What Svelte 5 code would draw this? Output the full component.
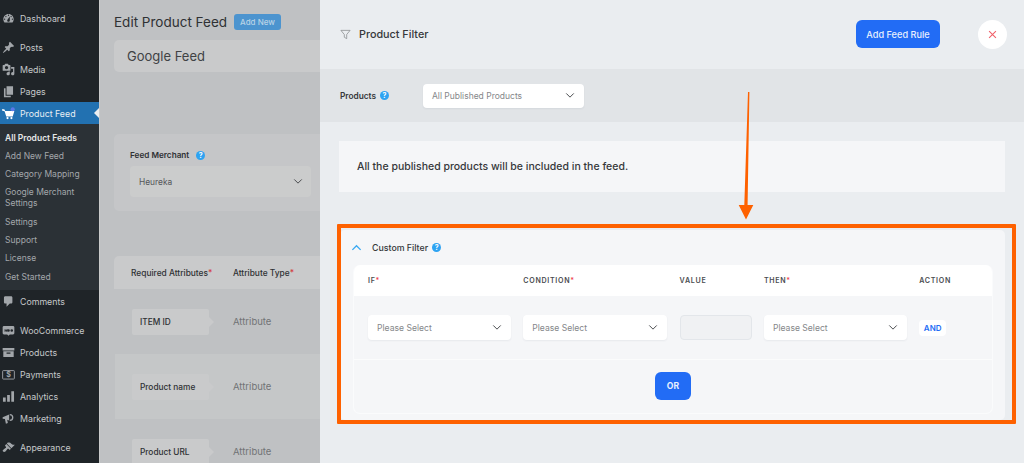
<script>
  const icons = {
    dashboard: 'M3.76 16h12.48c1.1-1.37 1.76-3.11 1.76-5 0-4.42-3.58-8-8-8s-8 3.58-8 8c0 1.89.66 3.63 1.76 5zM10 4c.55 0 1 .45 1 1s-.45 1-1 1-1-.45-1-1 .45-1 1-1zM6 6c.55 0 1 .45 1 1s-.45 1-1 1-1-.45-1-1 .45-1 1-1zm8 0c.55 0 1 .45 1 1s-.45 1-1 1-1-.45-1-1 .45-1 1-1zm-5.37 5.55L12 7v6c0 1.1-.9 2-2 2s-2-.9-2-2c0-.57.24-1.08.63-1.45zM4 10c.55 0 1 .45 1 1s-.45 1-1 1-1-.45-1-1 .45-1 1-1zm12 0c.55 0 1 .45 1 1s-.45 1-1 1-1-.45-1-1 .45-1 1-1z',
    posts: 'M10.44 3.02l1.82-1.82 6.36 6.35-1.83 1.82c-1.05-.68-2.48-.57-3.41.36l-.75.75c-.92.93-1.04 2.35-.35 3.41l-1.83 1.82-2.41-2.41-2.8 2.79c-.42.42-3.38 2.71-3.8 2.29s1.86-3.39 2.28-3.81l2.79-2.79L4.1 9.36l1.83-1.82c1.05.69 2.48.57 3.41-.36l.75-.75c.93-.92 1.04-2.35.35-3.41z',
    media: 'M13 11V4c0-.55-.45-1-1-1h-1.67L9 1H5L3.67 3H2c-.55 0-1 .45-1 1v7c0 .55.45 1 1 1h10c.55 0 1-.45 1-1zM7 4.5c1.38 0 2.5 1.12 2.5 2.5S8.38 9.5 7 9.5 4.5 8.38 4.5 7 5.62 4.5 7 4.5zM14 6h5v10.5c0 1.38-1.12 2.5-2.5 2.5S14 17.88 14 16.5s1.12-2.5 2.5-2.5c.17 0 .34.02.5.05V9h-3V6zm-4 8.05V13h2v3.5c0 1.38-1.12 2.5-2.5 2.5S7 17.88 7 16.5 8.12 14 9.5 14c.17 0 .34.02.5.05z',
    pages: 'M7 15V2h10v13H7zm-1.5 1.5h8V19H3V5h2.5v11.5z',
    comments: 'M5 2h9c1.1 0 2 .9 2 2v7c0 1.1-.9 2-2 2h-2l-5 5v-5H5c-1.1 0-2-.9-2-2V4c0-1.1.9-2 2-2z',
    woo: 'M3 3h14c1.1 0 2 .9 2 2v9c0 1.1-.9 2-2 2h-5l-2 2-2-2H3c-1.1 0-2-.9-2-2V5c0-1.1.9-2 2-2zm1 5v4h1.2l.8-2 .8 2H8l.6-4H7.4l-.3 2-.7-2h-.8l-.7 2-.3-2zm6 0a2 2 0 1 0 0 4 2 2 0 0 0 0-4zm5 0a2 2 0 1 0 0 4 2 2 0 0 0 0-4z',
    products: 'M1 3h18v4H1zM2 8h16v9H2zm5 2v2h6v-2z',
    analytics: 'M1.5 11.5h4.2V18H1.5zM7.9 7.5h4.2V18H7.9zM14.3 2h4.2v16h-4.2z',
    marketing: 'M12 3a5.5 5.5 0 1 1 0 11V12a3.5 3.5 0 1 0 0-7zM1 8.2 11 4v9.2L8 12l1 5-3 1-1.5-7.3L1 10.5z',
    appearance: 'M14.48 11.06L7.41 3.99l1.5-1.5c.5-.56 2.3-.47 3.51.32 1.21.8 1.43 1.28 2.91 2.1 1.18.64 2.45 1.26 4.45.85zm-.71.71L6.7 4.7 4.93 6.47c-.39.39-.39 1.02 0 1.41l1.06 1.06c.39.39.39 1.03 0 1.42-.6.6-1.43 1.11-2.21 1.69-.35.26-.7.53-1.01.84C1.43 13.23.4 14.98 1.72 16.3c1.33 1.33 3.04.25 4.38-.98.3-.31.58-.66.84-1.01.58-.78 1.09-1.61 1.69-2.21.39-.39 1.03-.39 1.42 0l1.06 1.06c.39.39 1.02.39 1.41 0z'
  };

  const topMenu = [
    { label: 'Dashboard', icon: 'dashboard', gap: true },
    { label: 'Posts', icon: 'posts' },
    { label: 'Media', icon: 'media' },
    { label: 'Pages', icon: 'pages' }
  ];
  const submenu = ['All Product Feeds', 'Add New Feed', 'Category Mapping', 'Google Merchant Settings', 'Settings', 'Support', 'License', 'Get Started'];
  const shopMenu = [
    { label: 'WooCommerce', icon: 'woo' },
    { label: 'Products', icon: 'products' },
    { label: 'Payments', icon: 'payments' },
    { label: 'Analytics', icon: 'analytics' },
    { label: 'Marketing', icon: 'marketing', gap: true },
    { label: 'Appearance', icon: 'appearance' }
  ];
  const attrs = [
    { name: 'ITEM ID', alt: false },
    { name: 'Product name', alt: true },
    { name: 'Product URL', alt: false }
  ];
</script>

{#snippet menuItem(item)}
  <div class="menu-item" class:gap={item.gap}>
    {#if item.icon === 'payments'}
      <svg class="mi" viewBox="0 0 20 20" aria-hidden="true">
        <rect x="1" y="4" width="18" height="13" rx="1" fill="none" stroke="#a2a6aa" stroke-width="1.4" />
        <text x="10" y="14.5" text-anchor="middle" font-size="11" font-weight="700" fill="#a2a6aa">$</text>
      </svg>
    {:else}
      <svg class="mi" viewBox="0 0 20 20" aria-hidden="true"><path d={icons[item.icon]} /></svg>
    {/if}
    <span>{item.label}</span>
  </div>
{/snippet}

{#snippet help()}
  <span class="help">?</span>
{/snippet}

{#snippet chevron()}
  <svg class="chev" viewBox="0 0 12 8" aria-hidden="true"><path d="M1.5 1.5 6 6l4.5-4.5" /></svg>
{/snippet}

<div class="page">
  <aside class="sidebar">
    {#each topMenu as item}
      {@render menuItem(item)}
    {/each}

    <div class="menu-item active">
      <svg class="mi cart" viewBox="0 0 20 20" aria-hidden="true">
        <path d="M0 3.5h3.5L5 6h14l-2.5 8.5h-10L4 6.500 0 5.500z" fill="#fff" />
        <circle cx="8.5" cy="17" r="1.7" fill="#fff" />
        <circle cx="14.5" cy="17" r="1.7" fill="#fff" />
        <circle cx="16.5" cy="3.5" r="3.2" fill="#5b78e8" />
      </svg>
      <span>Product Feed</span>
      <i class="notch"></i>
    </div>

    <div class="submenu">
      {#each submenu as label, i}
        <div class="sub-item" class:current={i === 0}>{label}</div>
      {/each}
    </div>

    <div class="menu-item gap">
      <svg class="mi" viewBox="0 0 20 20" aria-hidden="true"><path d={icons.comments} /></svg>
      <span>Comments</span>
    </div>

    {#each shopMenu as item}
      {@render menuItem(item)}
    {/each}
  </aside>

  <main class="main">
    <div class="title-row">
      <h1>Edit Product Feed</h1>
      <span class="add-new">Add New</span>
    </div>
    <div class="feed-name">Google Feed</div>

    <section class="merchant-card">
      <div class="merchant-label">Feed Merchant {@render help()}</div>
      <div class="merchant-select">Heureka {@render chevron()}</div>
    </section>

    <section class="attr-table">
      <div class="attr-head">
        <span class="col-a">Required Attributes<em>*</em></span>
        <span>Attribute Type<em>*</em></span>
      </div>
      {#each attrs as row}
        <div class="attr-row" class:alt={row.alt}>
          <div class="col-a"><span class="attr-pill">{row.name}</span></div>
          <span class="attr-type">Attribute</span>
        </div>
      {/each}
    </section>
  </main>

  <div class="drawer">
    <header class="drawer-head">
      <svg class="funnel" viewBox="0 0 12 12" aria-hidden="true"><path d="M1 1.5h10L7.3 6v4.5L4.7 9V6z" /></svg>
      <h2>Product Filter</h2>
      <button class="primary" type="button">Add Feed Rule</button>
      <button class="close" type="button" aria-label="Close">
        <svg viewBox="0 0 10 10"><path d="M1.2 1.2l7.6 7.6M8.8 1.2 1.2 8.8" /></svg>
      </button>
    </header>

    <div class="products-band">
      <span class="products-label">Products {@render help()}</span>
      <div class="select wide">All Published Products {@render chevron()}</div>
    </div>

    <div class="info">All the published products will be included in the feed.</div>

    <section class="filter">
      <div class="filter-title">
        <svg class="up" viewBox="0 0 12 8" aria-hidden="true"><path d="M1.5 6 6 1.5 10.5 6" /></svg>
        <span>Custom Filter</span>
        {@render help()}
      </div>
      <div class="filter-table">
        <div class="cols filter-head">
          <span>IF<em>*</em></span>
          <span>CONDITION<em>*</em></span>
          <span>VALUE</span>
          <span>THEN<em>*</em></span>
          <span>ACTION</span>
        </div>
        <div class="cols filter-row">
          <div class="select">Please Select {@render chevron()}</div>
          <div class="select">Please Select {@render chevron()}</div>
          <div class="value-input"></div>
          <div class="select">Please Select {@render chevron()}</div>
          <span class="and">AND</span>
        </div>
        <div class="filter-foot"><button class="primary or" type="button">OR</button></div>
      </div>
    </section>
  </div>

  <!-- annotation drawn over the screenshot -->
  <div class="highlight"></div>
  <svg class="arrow" viewBox="0 0 24 132" aria-hidden="true">
    <path d="M13 1H14.4L12.6 114H18.3L11 128.5 3.7 114H9.3Z" />
  </svg>
</div>

<style>
  :global(body) {
    margin: 0;
    overflow: hidden;
    font-family: Inter, "Liberation Sans", sans-serif;
  }

  .page {
    position: relative;
    display: flex;
    width: 1024px;
    height: 463px;
    overflow: hidden;
    background: #bfc1c3;
  }

  .sidebar {
    box-sizing: border-box;
    width: 99px;
    flex: none;
    padding-top: 7px;
    background: #1f2428;
    color: #c6c8ca;
    font-size: 8.8px;
  }

  .menu-item {
    position: relative;
    display: flex;
    align-items: center;
    height: 22px;
    padding-left: 2px;
    gap: 5px;
  }

  .menu-item.gap {
    margin-bottom: 7px;
  }

  .mi {
    width: 13px;
    height: 13px;
    flex: none;
    fill: #a2a6aa;
  }

  .active {
    background: #2271b1;
    color: #e8eef3;
  }

  .notch {
    position: absolute;
    right: 0;
    top: 6px;
    border: 5px solid transparent;
    border-right: 5px solid #eceef0;
    border-left: 0;
  }

  .submenu {
    box-sizing: border-box;
    height: 166px;
    padding: 5px 5px 0;
    background: #2b3136;
    color: #a3a7ab;
    font-size: 8.5px;
    line-height: 11px;
  }

  .sub-item {
    padding: 3.65px 0;
  }

  .sub-item.current {
    color: #e6e7e8;
    font-weight: 600;
  }

  .main {
    flex: 1;
    padding: 12px 0 0 14px;
    border-left: 1px solid #c9cacb;
    color: #2f3134;
    overflow: hidden;
  }

  .title-row {
    display: flex;
    align-items: center;
    gap: 7px;
    height: 19px;
  }

  h1 {
    margin: 0;
    font-size: 13.5px;
    font-weight: 400;
    white-space: nowrap;
  }

  .add-new {
    padding: 3px 6px;
    border-radius: 3px;
    background: #4c94cf;
    color: #b9d3e6;
    font-size: 8px;
    font-weight: 500;
    white-space: nowrap;
  }

  .feed-name {
    box-sizing: border-box;
    height: 32px;
    margin-top: 9px;
    padding-left: 13px;
    border-radius: 5px 0 0 5px;
    background: #c9cacb;
    color: #404245;
    font-size: 13px;
    line-height: 32px;
  }

  .merchant-card {
    box-sizing: border-box;
    height: 77px;
    margin-top: 62px;
    padding: 15px 0 0 16px;
    border-radius: 5px 0 0 5px;
    background: #c5c6c8;
  }

  .merchant-label {
    display: flex;
    align-items: center;
    gap: 7px;
    height: 12px;
    font-size: 8.2px;
    font-weight: 600;
  }

  .merchant-select {
    display: flex;
    align-items: center;
    justify-content: space-between;
    box-sizing: border-box;
    width: 181px;
    height: 31px;
    margin-top: 5px;
    padding: 0 8px 0 9px;
    border-radius: 4px;
    background: #cbcccc;
    color: #55575a;
    font-size: 8.4px;
  }

  .attr-table {
    margin-top: 45px;
    border-radius: 5px 0 0 0;
    overflow: hidden;
  }

  .attr-head {
    display: flex;
    align-items: center;
    height: 33px;
    background: #c9cacb;
    font-size: 8.4px;
    font-weight: 500;
  }

  .attr-head em {
    font-style: normal;
    color: #d33c44;
  }

  .col-a {
    box-sizing: border-box;
    width: 119px;
    padding-left: 17px;
    flex: none;
  }

  .attr-row {
    display: flex;
    align-items: center;
    height: 65px;
    margin-left: 1px;
    background: #bfc1c3;
  }

  .attr-row .col-a {
    width: 118px;
  }

  .attr-row.alt {
    background: #c5c7c8;
  }

  .attr-pill {
    position: relative;
    display: block;
    box-sizing: border-box;
    width: 77px;
    height: 26px;
    padding-left: 8px;
    border-radius: 2px;
    background: #c9cacb;
    font-size: 8.3px;
    font-weight: 500;
    line-height: 26px;
  }

  .attr-pill::after {
    content: '';
    position: absolute;
    left: 100%;
    top: 8px;
    border: 5px solid transparent;
    border-left: 5px solid #c9cacb;
    border-right: 0;
  }

  .attr-type {
    color: #717375;
    font-size: 9.5px;
  }

  .drawer {
    position: absolute;
    left: 320px;
    top: 0;
    right: 0;
    bottom: 0;
    background: #eaedf0;
    color: #36383b;
  }

  .drawer-head {
    display: flex;
    align-items: center;
    box-sizing: border-box;
    height: 69px;
    padding: 0 17px 1px 20px;
  }

  .funnel {
    width: 11px;
    height: 11px;
    fill: none;
    stroke: #85888b;
    stroke-width: 0.8;
  }

  h2 {
    flex: 1;
    margin: 0 0 0 8px;
    font-size: 10.8px;
    font-weight: 500;
  }

  button {
    border: 0;
    padding: 0;
    font-family: inherit;
  }

  .primary {
    width: 84px;
    height: 28px;
    border-radius: 6px;
    background: #226cf5;
    color: #e8f0fe;
    font-size: 9.2px;
    font-weight: 500;
  }

  .close {
    display: flex;
    align-items: center;
    justify-content: center;
    width: 29px;
    height: 29px;
    margin-left: 38px;
    border-radius: 50%;
    background: #fff;
  }

  .close svg {
    width: 9px;
    height: 9px;
    fill: none;
    stroke: #f0616a;
    stroke-width: 1.2;
  }

  .products-band {
    display: flex;
    align-items: center;
    height: 53px;
    padding-left: 20px;
    background: #e1e4e7;
  }

  .products-label {
    display: flex;
    align-items: center;
    gap: 4px;
    width: 83px;
    font-size: 8.3px;
    font-weight: 600;
  }

  .select {
    display: flex;
    align-items: center;
    justify-content: space-between;
    box-sizing: border-box;
    height: 25px;
    padding: 0 9px;
    border-radius: 4px;
    background: #fff;
    color: #85878a;
    font-size: 8.6px;
    box-shadow: 0 1px 2px rgba(60, 70, 90, 0.07);
  }

  .select.wide {
    width: 161px;
    height: 24px;
    font-size: 8.5px;
  }

  .info {
    box-sizing: border-box;
    width: 666px;
    height: 51px;
    margin: 19px 0 0 19px;
    padding-left: 18px;
    background: #f5f6f8;
    font-size: 10.5px;
    font-weight: 500;
    line-height: 51px;
    white-space: nowrap;
  }

  .filter {
    box-sizing: border-box;
    width: 665px;
    height: 190px;
    margin: 38px 0 0 20px;
    padding: 0 12px 0 13px;
    border-radius: 5px;
    background: #f5f6f8;
  }

  .filter-title {
    display: flex;
    align-items: center;
    height: 35px;
    margin-left: -2px;
    gap: 4px;
    font-size: 8.8px;
    font-weight: 500;
  }

  .filter-title span:first-of-type {
    margin-left: 6px;
  }

  .up {
    width: 11px;
    height: 8px;
    fill: none;
    stroke: #38a8f2;
    stroke-width: 1.4;
  }

  .filter-table {
    height: 148px;
    border: 1px solid #fafbfc;
    border-top: 0;
    border-radius: 7px;
    overflow: hidden;
  }

  .cols {
    display: grid;
    grid-template-columns: 143px 144px 72px 143px auto;
    column-gap: 12.3px;
    align-items: center;
    padding-left: 14px;
  }

  .filter-head {
    height: 31px;
    background: #fff;
    font-size: 7.1px;
    font-weight: 600;
    letter-spacing: 0.7px;
    color: #4a4c4f;
  }

  .filter-head em {
    font-style: normal;
    color: #ef4b55;
  }

  .filter-row {
    height: 63px;
    border-bottom: 1px solid #fbfcfc;
  }

  .value-input {
    box-sizing: border-box;
    height: 25px;
    border: 1px solid #e3e6ea;
    border-radius: 4px;
    background: #f0f1f3;
  }

  .and {
    box-sizing: border-box;
    width: 27px;
    height: 16px;
    border-radius: 4px;
    background: #fff;
    color: #226cf5;
    font-size: 8px;
    font-weight: 600;
    line-height: 16px;
    text-align: center;
  }

  .filter-foot {
    display: flex;
    justify-content: center;
    padding-top: 12px;
  }

  .or {
    width: 36px;
    font-size: 8.6px;
    font-weight: 700;
  }

  .help {
    display: inline-block;
    width: 9px;
    height: 9px;
    border-radius: 50%;
    background: #2ea3f2;
    color: #fff;
    font-size: 7px;
    font-weight: 700;
    line-height: 9px;
    text-align: center;
  }

  .chev {
    width: 10px;
    height: 7px;
    flex: none;
    fill: none;
    stroke: #4b4d50;
    stroke-width: 1.2;
  }

  .highlight {
    position: absolute;
    left: 337px;
    top: 224px;
    width: 679px;
    height: 200px;
    box-sizing: border-box;
    border: 4px solid #fe6100;
    border-radius: 1px;
  }

  .arrow {
    position: absolute;
    left: 735px;
    top: 91px;
    width: 24px;
    height: 132px;
    fill: #fe6100;
  }
</style>
